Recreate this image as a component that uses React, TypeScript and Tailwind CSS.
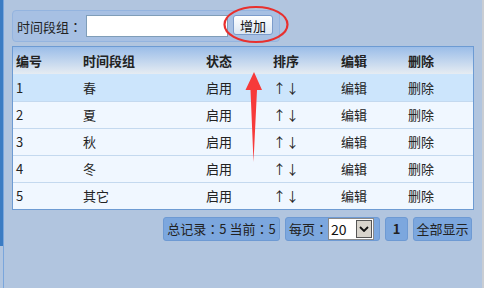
import React from "react";

const rows = [
  { id: "1", name: "春" },
  { id: "2", name: "夏" },
  { id: "3", name: "秋" },
  { id: "4", name: "冬" },
  { id: "5", name: "其它" },
];

const grid = "grid grid-cols-[67px_123px_67px_68px_67px_1fr] items-center";

function Colon() {
  return <span style={{ fontFamily: '"Noto Sans CJK TC", "Noto Sans CJK SC", sans-serif' }}>：</span>;
}

export default function App() {
  return (
    <div
      className="relative flex w-[484px] h-[288px] overflow-hidden bg-[#b1c5df] text-[13px] text-[#222]"
      style={{ fontFamily: '"Noto Sans CJK SC", "Noto Sans", sans-serif' }}
    >
      <div className="flex w-[4px] flex-col">
        <div className="flex h-[246px] w-full">
          <div className="w-[3px] bg-[#3b7cc3]"></div>
          <div className="w-[1px] bg-[#7aa6dc]"></div>
        </div>
        <div className="flex flex-1 w-full">
          <div className="w-[3px]"></div>
          <div className="w-[1px] bg-[#7aa6dc]"></div>
        </div>
      </div>

      <div className="flex flex-1 flex-col pl-[8px] pt-[10px]">
        {/* top panel */}
        <div className="flex h-[32px] w-[268px] items-center rounded-[4px] border border-[#94b4df] bg-[#a7c0e3] pl-[4px]">
          <span className="w-[69px] whitespace-nowrap leading-none">
            时间段组<Colon />
          </span>
          <div className="h-[22px] w-[142px] border border-[#7f9db8] bg-white"></div>
          <button className="ml-[5px] mb-[2px] h-[20px] w-[40px] rounded-[3px] border border-[#7c9ccb] bg-gradient-to-b from-[#ffffff] to-[#dbe6f3] text-[13px] leading-none text-[#111]">
            增加
          </button>
        </div>

        {/* table */}
        <div className="mt-[4px] w-[462px] border border-[#6d9bd3] bg-[#f0f7ff]">
          <div className={`${grid} h-[27px] bg-gradient-to-b from-[#9bbde8] to-[#e6ecf2] font-bold text-[#222]`}>
            <span className="pl-[3px]">编号</span>
            <span className="pl-[3px]">时间段组</span>
            <span className="pl-[3px]">状态</span>
            <span className="pl-[3px]">排序</span>
            <span className="pl-[3px]">编辑</span>
            <span className="pl-[3px]">删除</span>
          </div>
          {rows.map((r, i) => (
            <div
              key={r.id}
              className={`${grid} h-[27px] ${i === 0 ? "bg-[#cce5fc]" : "bg-[#f0f7ff]"} ${i > 0 ? "border-t border-[#c4d9ef]" : ""} text-[#222]`}
            >
              <span className="pl-[3px]">{r.id}</span>
              <span className="pl-[3px]">{r.name}</span>
              <span className="pl-[3px]">启用</span>
              <span className="pl-[3px]">↑↓</span>
              <span className="pl-[3px]">编辑</span>
              <span className="pl-[3px]">删除</span>
            </div>
          ))}
        </div>

        {/* pagination */}
        <div className="mt-[7px] flex w-[460px] justify-end gap-[5px]">
          <div className="flex h-[24px] w-[117px] items-center justify-center whitespace-nowrap rounded-[3px] border border-[#6e9ad3] bg-[#7ca7de]">
            总记录<Colon />5 当前<Colon />5
          </div>
          <div className="flex h-[24px] w-[95px] items-center whitespace-nowrap rounded-[3px] border border-[#6e9ad3] bg-[#7ca7de] pl-[3px]">
            <span>每页<Colon /></span>
            <div className="flex h-[22px] w-[46px] items-center border border-[#8a8a8a] bg-white">
              <span className="pl-[2px] text-[14px] leading-none text-[#111]">20</span>
              <div className="ml-auto mr-[1px] flex h-[18px] w-[16px] items-center justify-center border border-[#555] bg-[#d8d4cc]">
                <svg width="10" height="6" viewBox="0 0 10 6">
                  <path d="M1 1 L5 5 L9 1" fill="none" stroke="#111" strokeWidth="1.8" />
                </svg>
              </div>
            </div>
          </div>
          <div className="flex h-[24px] w-[23px] items-center justify-center rounded-[3px] border border-[#6e9ad3] bg-[#7ca7de] font-bold">
            1
          </div>
          <div className="flex h-[24px] w-[59px] items-center justify-center whitespace-nowrap rounded-[3px] border border-[#6e9ad3] bg-[#7ca7de]">
            全部显示
          </div>
        </div>
      </div>

      <div className="w-[2px] bg-[#c9cdd3]"></div>

      {/* annotations */}
      <svg className="pointer-events-none absolute left-0 top-0" width="484" height="288">
        <ellipse cx="256" cy="24.5" rx="31.5" ry="17.5" fill="none" stroke="#e8302e" strokeWidth="2.2" />
        <path d="M254 72 L262 90 L257 90 L253.5 162 L250.5 90 L245.5 90 Z" fill="#f73a3a" />
      </svg>
    </div>
  );
}
